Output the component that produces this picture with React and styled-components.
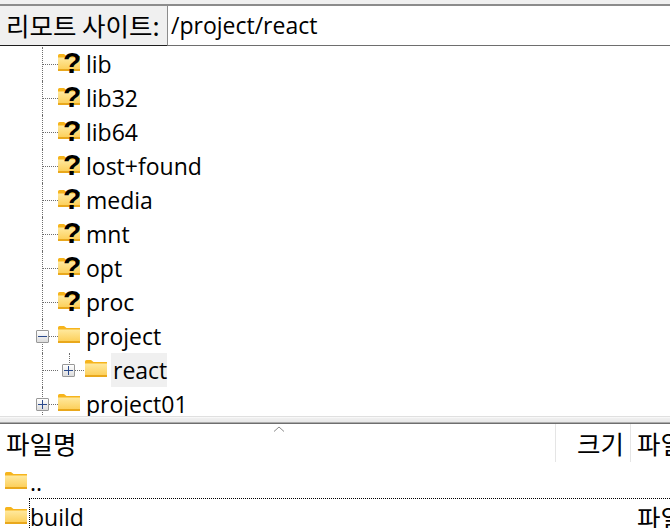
import { createGlobalStyle, styled } from 'styled-components';

const LATIN_FONT = '"Open Sans", "Noto Sans CJK KR", sans-serif';
const KOREAN_FONT = '"Noto Sans CJK KR", sans-serif';

const treeItems = [
    { name: 'lib', unknown: true },
    { name: 'lib32', unknown: true },
    { name: 'lib64', unknown: true },
    { name: 'lost+found', unknown: true },
    { name: 'media', unknown: true },
    { name: 'mnt', unknown: true },
    { name: 'opt', unknown: true },
    { name: 'proc', unknown: true },
    { name: 'project', toggle: 'minus' },
    { name: 'react', toggle: 'plus', nested: true, selected: true },
    { name: 'project01', toggle: 'plus' },
];

const FolderIcon = () => (
    <svg width='22' height='17' viewBox='0 0 22 17'>
        <defs>
            <linearGradient id='folderBody' x1='0' y1='0' x2='0' y2='1'>
                <stop offset='0' stopColor='#ffe99e' />
                <stop offset='1' stopColor='#fcce57' />
            </linearGradient>
        </defs>
        <path d='M0 1.5 Q0 0 1.5 0 H6 L8.5 2 H22 V5 H0 Z' fill='#f6b41c' />
        <rect x='0' y='3.5' width='22' height='12.5' fill='url(#folderBody)' />
        <rect x='0' y='15' width='22' height='2' fill='#e9a81c' />
    </svg>
);

const TreeToggle = ({ type }) => (
    <Toggle>
        <svg width='9' height='9' viewBox='0 0 9 9'>
            <path d={type === 'plus' ? 'M0 4.5H9M4.5 0V9' : 'M0 4.5H9'} stroke='#2b4a8c' strokeWidth='1' />
        </svg>
    </Toggle>
);

const App = () => {
    return (
        <>
            <GlobalStyle />
            <Page>
                <SiteBar>
                    <SiteLabel>리모트 사이트:</SiteLabel>
                    <SiteInput>/project/react</SiteInput>
                </SiteBar>

                <Tree>
                    {treeItems.map((item) => (
                        <TreeRow key={item.name}>
                            <Branch>
                                {item.toggle && !item.nested && <TreeToggle type={item.toggle} />}
                            </Branch>
                            {item.nested && (
                                <NestedBranch>
                                    <TreeToggle type={item.toggle} />
                                </NestedBranch>
                            )}
                            <FolderSlot>
                                <FolderIcon />
                                {item.unknown && <Unknown>?</Unknown>}
                            </FolderSlot>
                            <TreeName $selected={item.selected}>{item.name}</TreeName>
                        </TreeRow>
                    ))}
                </Tree>

                <Splitter />

                <ListHeader>
                    <NameColumn>
                        파일명
                        <SortCaret width='12' height='6' viewBox='0 0 12 6'>
                            <path d='M1 5.5L6 1L11 5.5' fill='none' stroke='#8a8a8a' strokeWidth='1' />
                        </SortCaret>
                    </NameColumn>
                    <SizeColumn>크기</SizeColumn>
                    <TypeColumn>파일</TypeColumn>
                </ListHeader>

                <FileRow>
                    <FolderIcon />
                    <FileName>..</FileName>
                </FileRow>
                <FocusedRow>
                    <FolderIcon />
                    <FocusBox>
                        <FocusName>build</FocusName>
                        <FileType>파일</FileType>
                    </FocusBox>
                </FocusedRow>
            </Page>
        </>
    );
};

const GlobalStyle = createGlobalStyle`
    html, body {
        margin: 0;
        padding: 0;
        background: #ffffff;
    }
`;

const Page = styled.div`
    width: 670px;
    height: 528px;
    overflow: hidden;
    font-family: ${LATIN_FONT};
    font-size: 23px;
    color: #000000;
    background: #ffffff;
`;

const SiteBar = styled.div`
    display: flex;
    height: 46px;
    box-sizing: border-box;
    background: #f0f0f0;
    padding-top: 4px;
    border-bottom: 1px solid #6e6e6e;
`;

const SiteLabel = styled.div`
    flex: none;
    width: 167px;
    box-sizing: border-box;
    padding-left: 6px;
    border-top: 2px solid #8c8c8c;
    border-bottom: 1px solid #1e1e1e;
    margin-bottom: -1px;
    font-family: ${KOREAN_FONT};
    font-size: 25.5px;
    line-height: 38px;
    white-space: nowrap;
    overflow: hidden;
`;

const SiteInput = styled.div`
    flex: 1;
    box-sizing: border-box;
    padding-left: 3px;
    border-top: 2px solid #8c8c8c;
    border-left: 1px solid #8c8c8c;
    background: #ffffff;
    line-height: 38px;
`;

const Tree = styled.div`
    height: 370px;
    padding-top: 1px;
    box-sizing: border-box;
    overflow: hidden;
`;

const TreeRow = styled.div`
    display: flex;
    align-items: center;
    height: 34px;
    padding-left: 42px;
`;

const Branch = styled.div`
    position: relative;
    flex: none;
    align-self: stretch;
    width: 16px;
    box-sizing: border-box;
    border-left: 1px dotted #6e6e6e;

    &::after {
        content: '';
        position: absolute;
        left: 0;
        top: 17px;
        width: 15px;
        border-top: 1px dotted #6e6e6e;
    }
`;

const NestedBranch = styled.div`
    position: relative;
    flex: none;
    align-self: stretch;
    width: 16px;
    margin-left: 11px;

    &::before {
        content: '';
        position: absolute;
        left: 0;
        top: 0;
        height: 12px;
        border-left: 1px dotted #6e6e6e;
    }

    &::after {
        content: '';
        position: absolute;
        left: 0;
        top: 17px;
        width: 15px;
        border-top: 1px dotted #6e6e6e;
    }
`;

const Toggle = styled.div`
    position: absolute;
    left: -7px;
    top: 11px;
    z-index: 1;
    display: flex;
    align-items: center;
    justify-content: center;
    width: 13px;
    height: 13px;
    box-sizing: border-box;
    border: 1px solid #989898;
    border-radius: 1px;
    background: linear-gradient(#ffffff, #dcdcdc);
`;

const FolderSlot = styled.div`
    position: relative;
    flex: none;
    display: flex;
    width: 22px;
    height: 17px;
    margin-top: -3px;
`;

const Unknown = styled.span`
    position: absolute;
    left: 5px;
    top: -8px;
    font-family: "Liberation Sans", sans-serif;
    font-size: 30px;
    font-weight: 700;
    line-height: 34px;
`;

const TreeName = styled.div`
    margin-left: ${(props) => (props.$selected ? '4px' : '6px')};
    padding-left: ${(props) => (props.$selected ? '2px' : '0')};
    line-height: 34px;
    white-space: nowrap;
    background: ${(props) => (props.$selected ? '#f0f0f0' : 'transparent')};
`;

const Splitter = styled.div`
    height: 8px;
    box-sizing: border-box;
    background: linear-gradient(#ffffff 0, #f0f0f0 1px, #e8e8e8 5px, #6e6e6e 6px, #6e6e6e 7px, #ffffff 8px);
    border-top: 1px solid #e0e0e0;
`;

const ListHeader = styled.div`
    display: flex;
    height: 38px;
    font-family: ${KOREAN_FONT};
    font-size: 25.5px;
`;

const NameColumn = styled.div`
    position: relative;
    flex: none;
    width: 556px;
    box-sizing: border-box;
    padding-left: 6px;
    line-height: 37px;
    border-right: 1px solid #e5e5e5;
`;

const SortCaret = styled.svg`
    position: absolute;
    left: 273px;
    top: 2px;
`;

const SizeColumn = styled.div`
    flex: none;
    width: 75px;
    box-sizing: border-box;
    padding-right: 6px;
    line-height: 37px;
    text-align: right;
    border-right: 1px solid #e5e5e5;
`;

const TypeColumn = styled.div`
    flex: 1;
    min-width: 0;
    padding-left: 6px;
    line-height: 37px;
    white-space: nowrap;
`;

const FileRow = styled.div`
    display: flex;
    align-items: center;
    height: 36px;
    padding-left: 5px;
`;

const FileName = styled.div`
    margin-left: 3px;
    line-height: 36px;
    padding-top: 4px;
`;

const FocusedRow = styled.div`
    display: flex;
    align-items: flex-start;
    height: 30px;
    padding-left: 5px;
    padding-top: 9px;
`;

const FocusBox = styled.div`
    flex: 1;
    min-width: 0;
    display: flex;
    justify-content: space-between;
    height: 30px;
    margin-top: -9px;
    margin-left: 2px;
    box-sizing: border-box;
    border-top: 1px dotted #000000;
    border-left: 1px dotted #000000;
`;

const FocusName = styled.div`
    line-height: 36px;
`;

const FileType = styled.div`
    flex: none;
    width: 33px;
    overflow: hidden;
    white-space: nowrap;
    font-family: ${KOREAN_FONT};
    font-size: 25.5px;
    line-height: 36px;
`;

export default App;
